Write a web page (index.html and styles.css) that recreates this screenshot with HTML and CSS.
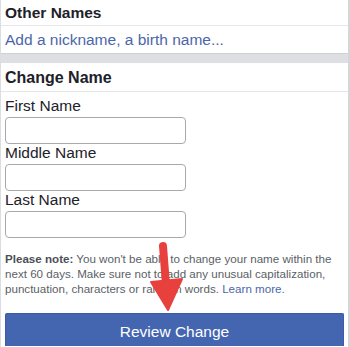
FILE: index.html
```html
<!DOCTYPE html>
<html lang="en">
  <head>
    <meta charset="UTF-8" />
    <meta name="viewport" content="width=device-width, initial-scale=1.0" />
    <title>Change Name</title>
    <link rel="stylesheet" href="styles.css">
  </head>
  <body>
    <div class="page">
      <div class="group">
        <h2 class="group-title">Other Names</h2>
        <a class="row-link" href="#">Add a nickname, a birth name...</a>
      </div>
      <div class="spacer"></div>
      <div class="group">
        <h2 class="group-title title-lg">Change Name</h2>
        <form class="name-form">
          <label for="first">First Name</label>
          <input type="text" id="first" />
          <label for="middle">Middle Name</label>
          <input type="text" id="middle" />
          <label for="last">Last Name</label>
          <input type="text" id="last" />
        </form>
        <p class="note">
          <b>Please note:</b> You won't be able to change your name within the next 60 days. Make sure not to add any unusual capitalization, punctuation, characters or random words. <a href="#">Learn more.</a>
        </p>
        <button type="button" class="review-btn">Review Change</button>
      </div>

      <svg class="arrow" width="50" height="80" viewBox="0 0 50 80">
        <path d="M22 9 L25 48" stroke="#e8403c" stroke-width="8" stroke-linecap="round" fill="none" />
        <path d="M10 45 L41 42 L27 73 Z" fill="#e8403c" stroke="#e8403c" stroke-width="2" stroke-linejoin="round" />
      </svg>
    </div>
  </body>
</html>
```

FILE: styles.css
```css
body {
  margin: 0;
  background: #fff;
  font-family: "Liberation Sans", Arial, sans-serif;
  color: #1d2129;
}
.page {
  position: relative;
  height: 347px;
  border-left: 1px solid #dadde1;
  border-right: 2px solid #d4d6da;
  box-sizing: border-box;
  overflow: hidden;
}
.group-title {
  margin: 0;
  height: 26px;
  padding: 4px 4px 0;
  box-sizing: border-box;
  font-size: 15.5px;
  font-weight: bold;
  color: #1d2129;
  border-bottom: 1px solid #e5e6e9;
}
.title-lg {
  height: 29px;
  padding-top: 6px;
  font-size: 16px;
}
.row-link {
  display: block;
  height: 28px;
  padding: 5px 4px 0;
  box-sizing: border-box;
  font-size: 15.5px;
  color: #4b67a8;
  text-decoration: none;
  border-bottom: 1px solid #cfd1d5;
}
.spacer {
  height: 9px;
  background: #dddfe2;
}
.name-form {
  display: flex;
  flex-direction: column;
  align-items: flex-start;
  padding: 5px 4px 0;
}
.name-form label {
  font-size: 15.5px;
  line-height: 18px;
  margin-bottom: 2px;
}
.name-form input {
  width: 181px;
  height: 27px;
  box-sizing: border-box;
  border: 1px solid #a7a9ad;
  border-radius: 4px;
  margin: 0;
  padding: 0 6px;
  font-size: 15px;
}
.note {
  margin: 13px 4px 0;
  font-size: 11.6px;
  line-height: 15px;
  color: #5b5f66;
}
.note b {
  color: #4b4f56;
}
.note a {
  color: #4b67a8;
  text-decoration: none;
}
.review-btn {
  display: block;
  width: 339px;
  height: 33px;
  margin: 17px 0 0 4px;
  background: #4465b0;
  border: 1px solid #3a5ca8;
  border-bottom: none;
  border-radius: 2px 2px 0 0;
  color: #fff;
  font-family: "Liberation Sans", Arial, sans-serif;
  font-size: 15.5px;
  padding: 4px 0 0;
}
.arrow {
  position: absolute;
  left: 140px;
  top: 237px;
}
```
